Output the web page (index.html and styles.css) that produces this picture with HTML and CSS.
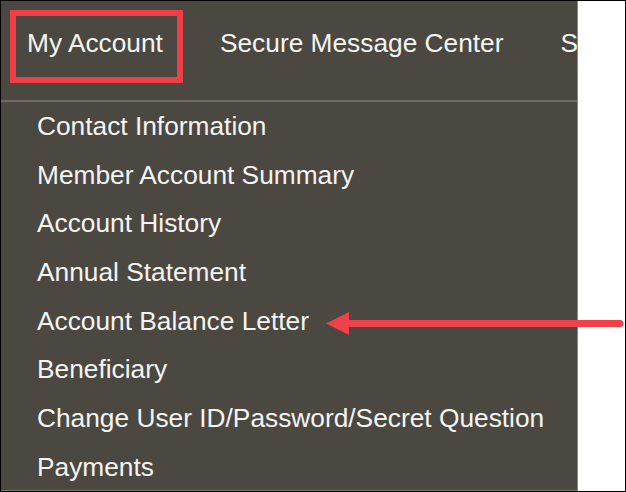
FILE: index.html
```html
<!DOCTYPE html>
<html lang="en">
<head>
<meta charset="utf-8">
<title>My Account menu</title>
<link rel="stylesheet" href="styles.css">
</head>
<body>
<div class="frame">
  <div class="panel">
    <nav class="topnav">
      <span class="nav-item">My Account</span>
      <span class="nav-item">Secure Message Center</span>
      <span class="nav-item">Services</span>
    </nav>
    <ul class="menu">
      <li>Contact Information</li>
      <li>Member Account Summary</li>
      <li>Account History</li>
      <li>Annual Statement</li>
      <li>Account Balance Letter</li>
      <li>Beneficiary</li>
      <li>Change User ID/Password/Secret Question</li>
      <li>Payments</li>
    </ul>
  </div>
  <div class="highlight-box"></div>
  <svg class="arrow" width="626" height="492" viewBox="0 0 626 492" aria-hidden="true">
    <line x1="346" y1="323.5" x2="620" y2="323.5" stroke="#f0414a" stroke-width="7" stroke-linecap="round"/>
    <polygon points="326,323.5 349,312 349,335" fill="#f0414a"/>
  </svg>
</div>
</body>
</html>
```
FILE: styles.css
```css
html, body {
  margin: 0;
  padding: 0;
  background: #ffffff;
}

.frame {
  position: relative;
  width: 626px;
  height: 492px;
  box-sizing: border-box;
  border: 1px solid #000000;
  background: #ffffff;
  overflow: hidden;
  font-family: "Liberation Sans", Arial, sans-serif;
}

.panel {
  width: 576px;
  height: 489px;
  background: #4b4841;
  border-right: 1px solid #8a877f;
  border-bottom: 1px solid #77746c;
  overflow: hidden;
  color: #f4f4f2;
}

.topnav {
  display: flex;
  gap: 57px;
  height: 99px;
  padding-left: 26px;
  border-bottom: 2px solid #6d6a62;
  white-space: nowrap;
}

.nav-item {
  font-size: 26.3px;
  line-height: 84px;
  flex: none;
}

.menu {
  list-style: none;
  margin: 0;
  padding: 0 0 0 36px;
}

.menu li {
  font-size: 26.3px;
  line-height: 48.7px;
  height: 48.7px;
  white-space: nowrap;
}

.highlight-box {
  position: absolute;
  left: 9px;
  top: 9px;
  width: 173px;
  height: 73px;
  box-sizing: border-box;
  border: 6px solid #ef3e46;
}

.arrow {
  position: absolute;
  left: -1px;
  top: -1px;
}
```
